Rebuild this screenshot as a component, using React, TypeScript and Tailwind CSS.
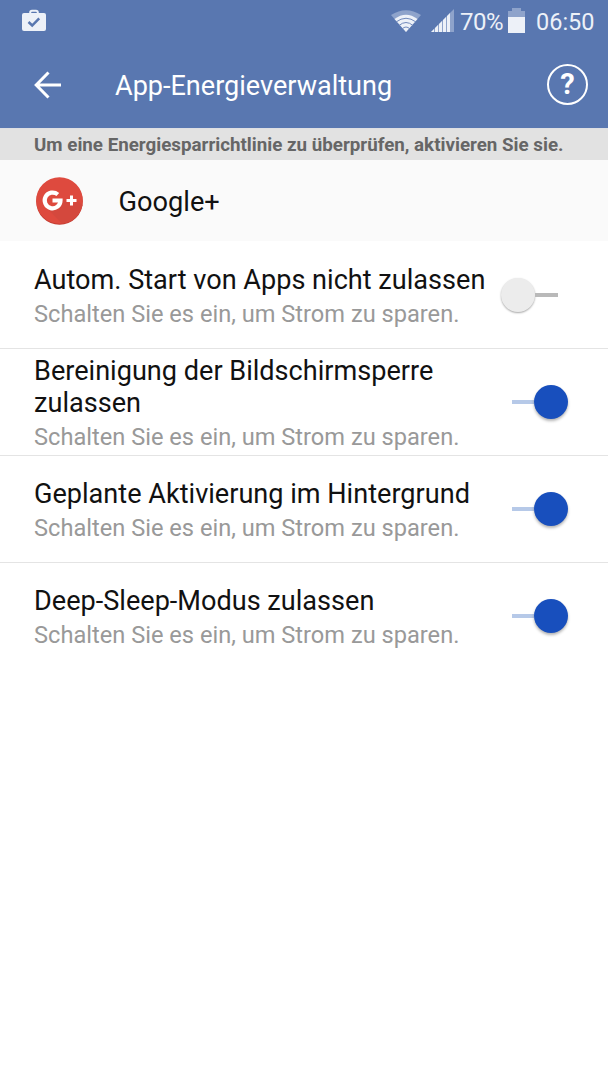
import React from "react";

type Policy = { lines: string[]; on: boolean };

const policies: Policy[] = [
  { lines: ["Autom. Start von Apps nicht zulassen"], on: false },
  { lines: ["Bereinigung der Bildschirmsperre", "zulassen"], on: true },
  { lines: ["Geplante Aktivierung im Hintergrund"], on: true },
  { lines: ["Deep-Sleep-Modus zulassen"], on: true },
];

function StatusBar() {
  return (
    <div className="flex h-[42px] items-center pl-[22px] pr-[14px] text-[24px] leading-[42px] text-[#edf1f8]">
      <svg width="24" height="24" viewBox="0 0 24 24" fill="none">
        <path d="M8.200 6V3.500q0-1.800 1.800-1.800h4q1.800 0 1.800 1.800V6" stroke="#edf1f8" strokeWidth="2" />
        <rect x="0" y="4" width="24" height="18" rx="2" fill="#edf1f8" />
        <path d="m6.500 13 3.700 3.500 7-7.200" stroke="#5977b0" strokeWidth="2.5" />
      </svg>
      <div className="flex-1" />
      <svg width="30" height="23" viewBox="0 0 30 23" fill="none" className="mr-[10px]">
        <path d="M0 5Q15-4.500 30 5L15 22Z" fill="#8ea3cb" />
        <path d="M3.500 9Q15 .5 26.500 9L15 22Z" fill="#edf1f8" />
        <path d="M5 12Q15 4.500 25 12M8 15.500Q15 9.500 22 15.500M11 19Q15 15 19 19" stroke="#7089bb" strokeWidth="1" />
      </svg>
      <svg width="23" height="24" viewBox="0 0 23 24" className="mr-[6px]">
        <path d="M0 23 23 0V23Z" fill="#8ea3cb" />
        <path d="M0 23 3 20v3zM4 19l3-3v7H4zM8 15l3-3v11H8zM12 11l3-3v15h-3zM16 7l3-3v19h-3z" fill="#edf1f8" />
      </svg>
      <span className="w-[43px] whitespace-nowrap pt-px tracking-[-0.500px]">70%</span>
      <svg width="17" height="25" viewBox="0 0 17 25" className="ml-[5px] mt-[-1px]">
        <path d="M0 3h4V0h9v3h4v7H0z" fill="#8ea3cb" />
        <path d="M0 9h17v16H0z" fill="#edf1f8" />
      </svg>
      <span className="ml-[11px] w-[58px] whitespace-nowrap pt-px text-[23.500px]">06:50</span>
    </div>
  );
}

function Toggle({ on }: { on: boolean }) {
  return on ? (
    <div className="mr-10 flex shrink-0 items-center">
      <div className="h-1 w-[22px] bg-[#b6c9e8]" />
      <div className="size-[34px] rounded-full bg-[#184fbd] shadow-[0_2px_3px_rgba(0,0,0,0.3)]" />
    </div>
  ) : (
    <div className="mr-[50px] flex shrink-0 items-center">
      <div className="size-[34px] rounded-full bg-[#ececec] shadow-[0_1px_2px_rgba(0,0,0,0.35)]" />
      <div className="h-1 w-[23px] bg-[#b9b9b9]" />
    </div>
  );
}

export default function App() {
  return (
    <div className="h-[1080px] w-[608px] overflow-hidden bg-white font-['Roboto',sans-serif]">
      <header className="h-32 bg-[#5977b0]">
        <StatusBar />
        <div className="flex h-[85px] items-center pl-[34px] pr-[20px] text-white">
          <svg width="28" height="28" viewBox="0 0 28 28" fill="none" stroke="white" strokeWidth="3">
            <path d="M14.500 1.500 2.200 14l12.300 12.500M2 14h25" />
          </svg>
          <h1 className="ml-[53px] flex-1 whitespace-nowrap pt-[3px] text-[27.060px] font-normal leading-8">App-Energieverwaltung</h1>
          <div className="flex size-[41px] items-center justify-center rounded-full border-2 border-white text-[29px] font-bold leading-none">?</div>
        </div>
      </header>
      <div className="h-8 whitespace-nowrap border-t border-[#dedfe3] bg-[#e2e2e2] pl-[34px] text-[18.750px] font-bold leading-[33px] text-[#666]">
        Um eine Energiesparrichtlinie zu überprüfen, aktivieren Sie sie.
      </div>
      <div className="flex h-[81px] items-center bg-[#fafafa] pl-9 text-[27.200px] text-[#111]">
        <svg width="47" height="48" viewBox="0 0 47 48">
          <circle cx="23.500" cy="24.500" r="23.300" fill="#c33b31" />
          <circle cx="23.500" cy="23.500" r="23.300" fill="#de4a3e" />
          <path d="m10 30 12-1 6-6 8 5 6-4 4.500 4A23.300 23.300 0 0 1 26 46.600z" fill="#d4483d" />
          <path d="M21.800 17.500a7.900 7.900 0 1 0 2.700 6H16.500" fill="none" stroke="#fff" strokeWidth="4.200" />
          <path d="M35.500 18.500v10M30.500 23.500h10" stroke="#fff" strokeWidth="3" />
        </svg>
        <span className="ml-[35.500px] pt-1">Google+</span>
      </div>
      <main className="pt-px">
        {policies.map((policy) => (
          <section key={policy.lines[0]} className="flex h-[107px] items-center border-b border-[#e4e4e4] pl-[34px] last:h-[106px] last:border-b-0">
            <div className="flex-1 whitespace-nowrap pt-1">
              <h2 className="text-[27.100px] font-normal leading-8 text-[#111]">
                {policy.lines.map((line) => <span key={line} className="block">{line}</span>)}
              </h2>
              <p className="pt-[2px] text-[23.640px] leading-8 text-[#999]">Schalten Sie es ein, um Strom zu sparen.</p>
            </div>
            <Toggle on={policy.on} />
          </section>
        ))}
      </main>
    </div>
  );
}
